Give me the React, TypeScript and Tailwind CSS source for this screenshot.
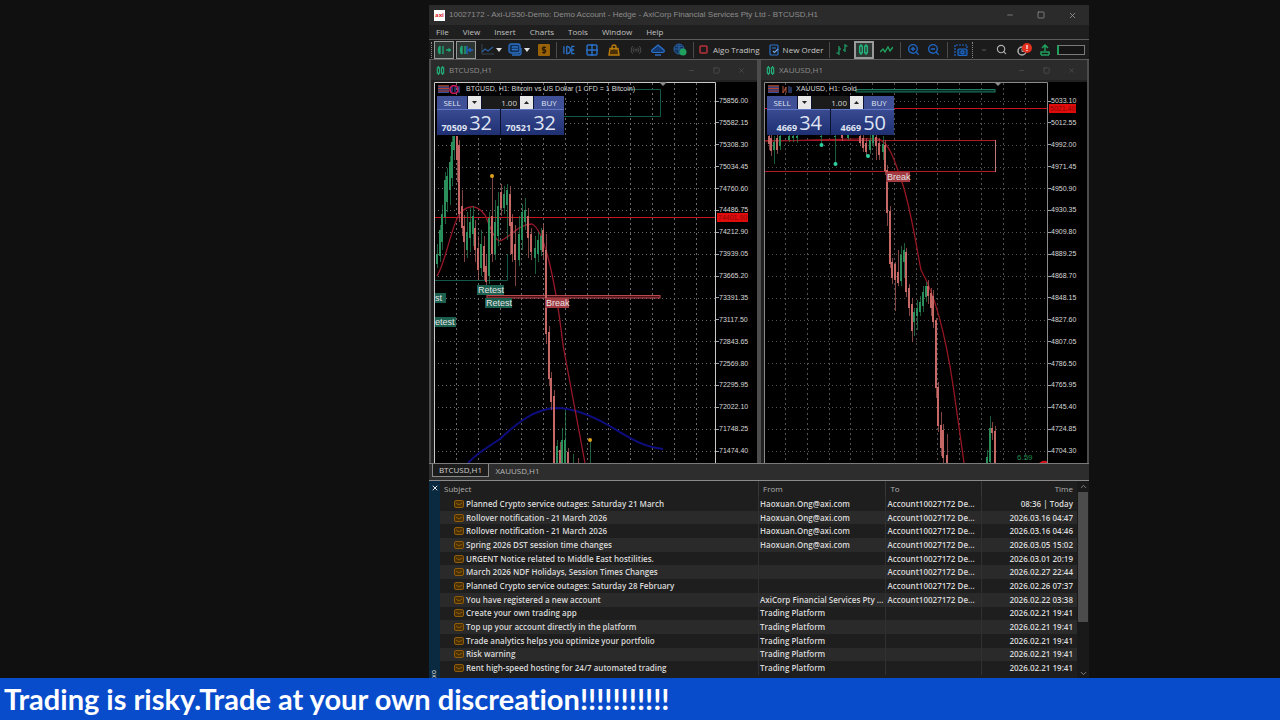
import { useState } from "react";
import type { ReactNode } from "react";
import { Search, Radio, X, Minus, Square, ChevronUp, ChevronDown, ZoomIn, ZoomOut } from "lucide-react";

// x, high, body top, body bottom, low, 1 = up / 0 = down
type Candle = [number, number, number, number, number, 0 | 1];
type Tag = { x: number; y: number; w: number; text: string; kind: "retest" | "break" };

const btcCandles: Candle[] = [
  [437, 244, 254, 264, 268, 1], [440, 225, 230, 256, 262, 1], [442, 205, 214, 242, 250, 1], [445, 172, 180, 217, 224, 1],
  [447, 168, 176, 202, 212, 1], [450, 156, 162, 190, 205, 1], [452, 136, 142, 178, 186, 1], [454, 136, 136, 150, 160, 1],
  [457, 136, 136, 160, 182, 0], [459, 140, 145, 214, 222, 0], [462, 190, 206, 228, 236, 0], [464, 215, 226, 242, 262, 0],
  [467, 212, 232, 250, 258, 1], [470, 208, 222, 238, 252, 1], [473, 206, 216, 234, 246, 1], [475, 220, 228, 250, 262, 0],
  [478, 236, 248, 270, 280, 0], [481, 230, 244, 268, 276, 1], [484, 236, 246, 272, 280, 0], [486, 255, 266, 282, 288, 0],
  [489, 212, 218, 276, 284, 1], [492, 176, 216, 254, 262, 0], [495, 200, 222, 254, 260, 1], [498, 192, 206, 236, 246, 1],
  [501, 184, 192, 208, 216, 0], [504, 186, 194, 208, 214, 1], [507, 184, 190, 205, 240, 1], [510, 186, 194, 226, 254, 0],
  [512, 214, 222, 254, 262, 0], [515, 225, 244, 260, 286, 0], [519, 216, 234, 260, 266, 1], [522, 204, 212, 240, 250, 1],
  [525, 198, 210, 222, 230, 1], [528, 208, 216, 238, 258, 0], [531, 228, 234, 252, 260, 0], [535, 236, 248, 258, 274, 1],
  [538, 232, 240, 254, 262, 1], [541, 228, 236, 250, 256, 1], [543, 224, 230, 252, 258, 0], [546, 234, 250, 334, 344, 0],
  [549, 326, 332, 379, 386, 0], [551, 372, 378, 402, 410, 0], [554, 390, 396, 463, 463, 0], [557, 440, 446, 463, 463, 1],
  [560, 442, 450, 463, 463, 0], [562, 428, 440, 463, 463, 1], [565, 410, 440, 463, 463, 1], [568, 448, 452, 463, 463, 0],
  [573, 454, 463, 463, 463, 1], [578, 458, 463, 463, 463, 0], [590, 442, 463, 463, 463, 1],
];

const xauCandles: Candle[] = [
  [769, 132, 136, 144, 150, 0], [771, 134, 138, 151, 156, 0], [774, 136, 142, 150, 164, 1], [777, 134, 138, 150, 154, 0],
  [780, 132, 136, 146, 150, 1], [789, 132, 136, 140, 142, 1], [793, 132, 136, 138, 142, 1], [797, 132, 136, 138, 143, 1],
  [821, 132, 136, 137, 145, 1], [835, 132, 136, 137, 164, 1], [842, 132, 135, 138, 141, 0], [848, 132, 135, 138, 140, 1],
  [860, 132, 136, 143, 146, 0], [863, 134, 138, 148, 152, 0], [866, 138, 143, 152, 156, 0], [870, 132, 140, 150, 154, 1],
  [873, 132, 135, 143, 147, 1], [876, 134, 137, 146, 160, 0], [879, 138, 143, 155, 160, 0], [883, 136, 144, 152, 160, 1],
  [885, 140, 145, 171, 175, 0], [887, 165, 170, 213, 226, 0], [890, 206, 211, 264, 268, 0], [892, 258, 262, 278, 284, 0],
  [895, 262, 264, 280, 311, 0], [898, 250, 272, 283, 286, 0], [901, 246, 255, 281, 286, 1], [904, 243, 250, 262, 278, 1],
  [906, 248, 252, 292, 297, 0], [909, 284, 288, 308, 316, 0], [912, 298, 304, 331, 342, 0], [914, 308, 312, 322, 336, 1],
  [917, 300, 308, 316, 330, 1], [920, 296, 302, 312, 316, 1], [923, 286, 292, 306, 312, 1], [926, 282, 286, 297, 302, 1],
  [928, 280, 286, 296, 304, 0], [931, 288, 293, 308, 316, 0], [933, 290, 296, 322, 328, 0], [936, 318, 320, 388, 398, 0],
  [938, 382, 387, 426, 432, 0], [941, 412, 425, 448, 456, 0], [943, 424, 430, 458, 463, 0], [947, 434, 455, 463, 463, 0],
  [987, 450, 457, 463, 463, 1], [990, 416, 428, 462, 463, 1], [992, 422, 428, 433, 440, 0], [995, 426, 431, 463, 463, 0],
];

const btcTags: Tag[] = [
  { x: 477, y: 285, w: 27, text: "Retest", kind: "retest" },
  { x: 485, y: 298, w: 27, text: "Retest", kind: "retest" },
  { x: 434, y: 293, w: 12, text: "st", kind: "retest" },
  { x: 434, y: 317, w: 22, text: "etest", kind: "retest" },
  { x: 545, y: 298, w: 24, text: "Break", kind: "break" },
];
const xauTags: Tag[] = [{ x: 886, y: 172, w: 24, text: "Break", kind: "break" }];

const btcPrices = ["75856.00", "75582.15", "75308.30", "75034.45", "74760.60", "74486.75", "74212.90", "73939.05", "73665.20", "73391.35", "73117.50", "72843.65", "72569.80", "72295.95", "72022.10", "71748.25", "71474.40"];
const xauPrices = ["5033.10", "5012.55", "4992.00", "4971.45", "4950.90", "4930.35", "4909.80", "4889.25", "4868.70", "4848.15", "4827.60", "4807.05", "4786.50", "4765.95", "4745.40", "4724.85", "4704.30"];

const HAO = "Haoxuan.Ong@axi.com";
const ACC = "Account10027172 De...";
const TP = "Trading Platform";
const mails = [
  ["Planned Crypto service outages: Saturday 21 March", HAO, ACC, "08:36 | Today"],
  ["Rollover notification - 21 March 2026", HAO, ACC, "2026.03.16 04:47"],
  ["Rollover notification - 21 March 2026", HAO, ACC, "2026.03.16 04:46"],
  ["Spring 2026 DST session time changes", HAO, ACC, "2026.03.05 15:02"],
  ["URGENT Notice related to Middle East hostilities.", "", ACC, "2026.03.01 20:19"],
  ["March 2026 NDF Holidays, Session Times Changes", "", ACC, "2026.02.27 22:44"],
  ["Planned Crypto service outages: Saturday 28 February", "", ACC, "2026.02.26 07:37"],
  ["You have registered a new account", "AxiCorp Financial Services Pty ...", ACC, "2026.02.22 03:38"],
  ["Create your own trading app", TP, "", "2026.02.21 19:41"],
  ["Top up your account directly in the platform", TP, "", "2026.02.21 19:41"],
  ["Trade analytics helps you optimize your portfolio", TP, "", "2026.02.21 19:41"],
  ["Risk warning", TP, "", "2026.02.21 19:41"],
  ["Rent high-speed hosting for 24/7 automated trading", TP, "", "2026.02.21 19:41"],
];

function Candles({ data }: { data: Candle[] }) {
  return (
    <g shapeRendering="crispEdges">
      {data.map(([x, hi, top, bot, lo, up]) => (
        <g key={x} fill={up ? "#2b8f5c" : "#c56866"}>
          <rect x={x} y={hi} width={1} height={lo - hi} opacity={0.65} />
          <rect x={x - 1} y={top} width={2} height={bot - top} />
        </g>
      ))}
    </g>
  );
}

function Grid({ x0, left, right, color }: { x0: number; left: number; right: number; color: string }) {
  const cols = Array.from({ length: 12 }, (_, i) => Math.round(x0 + i * 21.78) + 0.5);
  const rows = Array.from({ length: 17 }, (_, i) => Math.round(101 + i * 21.85) + 0.5);
  return (
    <g stroke={color}>
      {cols.map((x) => <line key={x} x1={x} x2={x} y1={83} y2={463} strokeDasharray="2 3" />)}
      {rows.map((y) => <line key={y} x1={left} x2={right} y1={y} y2={y} strokeDasharray="1 3" />)}
    </g>
  );
}

function Tags({ tags }: { tags: Tag[] }) {
  return (
    <>
      {tags.map((t) => (
        <g key={`${t.x}-${t.y}`}>
          <rect x={t.x} y={t.y} width={t.w} height={10} fill={t.kind === "retest" ? "#1b5f4f" : "#a23a42"} />
          <text x={t.x + 1} y={t.y + 8} fontSize={9} fill="#e4e4e4">{t.text}</text>
        </g>
      ))}
    </>
  );
}

function PriceAxis({ prices, tag, tagClass }: { prices: string[]; tag: string; tagClass: string }) {
  return (
    <div className="relative flex flex-1 flex-col justify-between pt-[14px] pb-[7px] font-['Liberation_Sans',sans-serif] text-[7px] text-[#d8d8d8]">
      {prices.map((p) => (
        <div key={p} className="flex h-[10px] items-center whitespace-nowrap leading-[10px]">
          <span className="h-px w-[3px] bg-[#a0a0a0]" />{p}
        </div>
      ))}
      <span className={`absolute left-px h-[9px] bg-[#e00c0c] px-px leading-[9px] text-[#8a0505] ${tagClass}`}>{tag}</span>
    </div>
  );
}

function TradePanel({ base, bid, ask }: { base: [string, string]; bid: string; ask: string }) {
  const [lots, setLots] = useState("1.00");
  const step = (d: number) => setLots((v) => Math.max(0.01, Number(v) + d).toFixed(2));
  return (
    <div className="absolute left-[3px] top-[14px] w-[127px] font-['Open_Sans',sans-serif] text-[#dfe3f2]">
      <div className="flex h-[13px] items-stretch gap-px bg-[#0c1230]">
        <button className="w-[30px] bg-[#3f5096] text-[8px] leading-[13px]">SELL</button>
        <button aria-label="Decrease volume" onClick={() => step(-0.01)} className="flex w-[13px] items-center justify-center bg-[#e8e8e8]">
          <svg width="5" height="3" viewBox="0 0 5 3"><path d="M0 0h5L2.5 3z" fill="#222" /></svg>
        </button>
        <input aria-label="Volume" value={lots} onChange={(e) => setLots(e.target.value)}
          className="min-w-0 flex-1 bg-[#1b1b1b] pr-0.5 text-right text-[8px] leading-[13px] text-[#d5d5d5] outline-none" />
        <button aria-label="Increase volume" onClick={() => step(0.01)} className="flex w-[13px] items-center justify-center bg-[#e8e8e8]">
          <svg width="5" height="3" viewBox="0 0 5 3"><path d="M0 3h5L2.5 0z" fill="#222" /></svg>
        </button>
        <button className="w-[30px] bg-[#3f5096] text-[8px] leading-[13px]">BUY</button>
      </div>
      <div className="grid h-[26px] grid-cols-2 gap-px bg-[#0c1230]">
        {[bid, ask].map((v, i) => (
          <button key={i} className="flex items-end justify-end gap-0.5 border-t border-[#5f76c4] bg-gradient-to-b from-[#3a4a90] to-[#1e2f72] pr-2">
            <span className="text-[9px] leading-[14px] font-bold">{base[i]}</span>
            <span className="text-[20px] leading-[24px]">{v}</span>
          </button>
        ))}
      </div>
    </div>
  );
}

function CandleIcon({ size = 10 }: { size?: number }) {
  return (
    <svg width={size} height={size} viewBox="0 0 10 10" fill="none" stroke="#23b07a" strokeWidth="1.3">
      <rect x="1.5" y="2" width="2.4" height="6" /><path d="M2.7 0v2M2.7 8v2M7.3 0v2M7.3 8v2" />
      <rect x="6.1" y="2" width="2.4" height="6" />
    </svg>
  );
}

function ChartWindow({ title, heading, flag, plotClass, children, overlay, axis }: {
  title: string; heading: string; flag: ReactNode; plotClass: string; children: ReactNode; overlay: ReactNode; axis: ReactNode;
}) {
  return (
    <section className="flex min-w-0 flex-1 flex-col border-x-2 border-[#4c4c4c] bg-[#2b2b2b]">
      <div className="flex h-5 items-center gap-1 pl-[5px] pr-3 text-[8px] text-[#8c8c8c]">
        <CandleIcon size={9} />
        <span className="flex-1">{title}</span>
        <div className="flex gap-[18px] text-[#5c5c5c]">
          <button aria-label="Minimize chart"><Minus size={7} /></button>
          <button aria-label="Maximize chart"><Square size={7} /></button>
          <button aria-label="Close chart"><X size={7} /></button>
        </div>
      </div>
      <div className="flex min-h-0 flex-1 border-t-2 border-l-[3px] border-[#202020] bg-black">
        <div className={`relative shrink-0 overflow-hidden ${plotClass}`}>
          {children}
          <div className="absolute left-1 top-[3px] flex h-2 items-center gap-1 whitespace-nowrap font-['Liberation_Sans',sans-serif] text-[7px] leading-2 text-[#d8d8d8]">
            {flag}<span>{heading}</span>
          </div>
          {overlay}
        </div>
        {axis}
      </div>
    </section>
  );
}

function Flag({ pair }: { pair: ReactNode }) {
  return (
    <svg width="24" height="9" viewBox="0 0 24 9">
      <path d="M0 1h11M0 3.5h11M0 6h11" stroke="#b8442a" strokeWidth="1.3" />
      <path d="M0 2.2h11M0 4.8h11M0 7.4h11" stroke="#3c4f9c" strokeWidth="1.2" />
      {pair}
    </svg>
  );
}

function Sep() {
  return <span className="h-4 w-px bg-[#4a4a4a]" />;
}

function Tool({ label, className = "w-[14px]", children }: { label: string; className?: string; children: ReactNode }) {
  return <button aria-label={label} className={`flex h-[18px] items-center justify-center ${className}`}>{children}</button>;
}

function Caret() {
  return <svg width="6" height="4" viewBox="0 0 6 4"><path d="M0 0h6L3 4z" fill="#e0e0e0" /></svg>;
}

function Toolbar() {
  return (
    <div className="flex h-[21px] shrink-0 items-center overflow-hidden whitespace-nowrap border-y border-[#5c5c5c] bg-[#1b1b1b] text-[8px] text-[#c8c8c8]">
      <div className="ml-[2px] h-4 w-px border-l border-dotted border-[#8a8a8a]" />
      <div className="ml-[2px] flex items-center gap-[2px]">
        <Tool label="Auto scroll" className="w-5 border border-[#9a9a9a] bg-[#2e3633]">
          <svg width="14" height="10" viewBox="0 0 14 10" fill="none" stroke="#1fa673" strokeWidth="1.4"><path d="M3 1C1 3 1 7 3 9M6 1v8M3 1v8M9 5h4M11.5 3.500l2 1.500-2 1.500" /></svg>
        </Tool>
        <Tool label="Chart shift" className="w-5 border border-[#9a9a9a] bg-[#2e3633]">
          <svg width="14" height="10" viewBox="0 0 14 10" fill="none" strokeWidth="1.4"><path d="M3 1C1 3 1 7 3 9M3 1v8M6 1v8" stroke="#1fa673" /><path d="M8 1v8M9 5h5M11 3v4" stroke="#1f66c4" /></svg>
        </Tool>
      </div>
      <div className="ml-1 flex items-center gap-[2px]">
        <Tool label="Indicators"><svg width="13" height="11" viewBox="0 0 13 11" fill="none"><path d="M1 0v10h12" stroke="#3a4450" /><path d="M1 8l3-3 3 2 5-4" stroke="#2b5f9e" strokeWidth="1.2" /></svg></Tool>
        <Caret />
        <Tool label="Templates" className="ml-1 w-[14px]">
          <svg width="14" height="13" viewBox="0 0 14 13" fill="#14335a" stroke="#2a70c8" strokeWidth="1.3"><rect x="1" y="1" width="11" height="9" rx="2" /><path d="M4 4h6M4 6.500h6M4 12h7q2 0 2-2V5" fill="none" /></svg>
        </Tool>
        <Caret />
      </div>
      <div className="ml-2 flex items-center gap-[6px]">
        <Tool label="Market" className="w-3">
          <svg width="12" height="12" viewBox="0 0 12 12"><rect width="12" height="12" rx="1" fill="#9a6206" /><path d="M8 3.500H5q-1.300 1.200 0 2.500h2q1.300 1.200 0 2.500H4M6 2v8" fill="none" stroke="#2a1c04" strokeWidth="1.200" /></svg>
        </Tool>
        <Sep />
        <Tool label="MetaEditor IDE" className="w-3">
          <svg width="13" height="10" viewBox="0 0 13 10" fill="none" stroke="#2a70c8" strokeWidth="1.4"><path d="M1 1v8M4 1v8h1q3-1 3-4T5 1H4M12.500 1H9.500v8h3M9.500 5h2.500" /></svg>
        </Tool>
      </div>
      <div className="ml-[10px] flex items-center gap-2">
        <Tool label="Tile windows">
          <svg width="12" height="12" viewBox="0 0 12 12" fill="none" stroke="#2a70c8" strokeWidth="1.400"><rect x="1" y="1" width="10" height="10" rx="1" /><path d="M6 0v12M0 6h12" /></svg>
        </Tool>
        <Tool label="Shop">
          <svg width="12" height="12" viewBox="0 0 12 12" fill="#4a3105" stroke="#b97c0c" strokeWidth="1.400"><path d="M2 4.500h8l1 6.500H1z" /><path d="M4 6V3q0-2 2-2t2 2v3" fill="none" /></svg>
        </Tool>
        <Tool label="Signals"><Radio size={12} className="text-[#4a4a4a]" /></Tool>
        <Tool label="Cloud">
          <svg width="14" height="12" viewBox="0 0 14 12"><path d="M7 1l6 5q1 2-1 2.500H2Q0 8 1 6z" fill="#123a70" stroke="#2a70c8" strokeWidth="1.200" /><path d="M4 11h6" stroke="#2a70c8" strokeWidth="1.400" /></svg>
        </Tool>
        <Tool label="Community">
          <svg width="14" height="13" viewBox="0 0 14 13"><circle cx="6" cy="6" r="5" fill="#12345c" stroke="#2a5f9e" /><path d="M1 6h10M6 1v10M3 3q3 2 6 0" stroke="#2a5f9e" fill="none" /><circle cx="10" cy="9" r="3.500" fill="#1fa05c" /></svg>
        </Tool>
      </div>
      <div className="ml-[6px] flex items-center gap-[5px]">
        <Sep />
        <button className="flex items-center gap-[5px]">
          <svg width="9" height="9" viewBox="0 0 9 9"><rect x="1" y="1" width="7" height="7" rx="1" fill="none" stroke="#b8323a" strokeWidth="1.500" /></svg>
          Algo Trading
        </button>
        <button className="ml-1 flex items-center gap-1">
          <svg width="10" height="12" viewBox="0 0 10 12" fill="none" stroke="#2a70c8" strokeWidth="1.200"><rect x="1" y="1" width="8" height="10" rx="1" /><path d="M3 4h4" /><path d="M4 7l1.500 1.500L9 5" stroke="#6fa6e8" /></svg>
          New Order
        </button>
        <Sep />
      </div>
      <div className="ml-[6px] flex items-center gap-[6px]">
        <Tool label="Bars" className="w-3"><svg width="12" height="11" viewBox="0 0 12 11" fill="none" stroke="#1d8f5c" strokeWidth="1.400"><path d="M3 2v9M0.500 9H3M3 5h2M9 0v8M9 2h2.500M7 6h2" /></svg></Tool>
        <Tool label="Candles" className="w-5 border-2 border-[#9a9a9a] bg-[#2e3633]"><CandleIcon size={11} /></Tool>
        <Tool label="Line"><svg width="13" height="8" viewBox="0 0 13 8" fill="none" stroke="#1fa05c" strokeWidth="1.400"><path d="M0 6l3-3 2 3 3-5 2 4 3-4" /></svg></Tool>
        <Sep />
        <Tool label="Zoom in"><ZoomIn size={13} className="text-[#1f66c4]" strokeWidth={2.5} /></Tool>
        <Tool label="Zoom out"><ZoomOut size={13} className="text-[#1f66c4]" strokeWidth={2.5} /></Tool>
        <Sep />
        <Tool label="Screenshot">
          <svg width="14" height="12" viewBox="0 0 14 12" fill="none" stroke="#1f66c4" strokeWidth="1.200"><path d="M1 12V1h12v4" strokeDasharray="2 1" /><rect x="4" y="5" width="9" height="6.500" rx="1" fill="#12345c" /><circle cx="8.500" cy="8.300" r="1.500" /></svg>
        </Tool>
      </div>
      <span className="ml-1 h-4 border-l border-dotted border-[#8a8a8a]" />
      <div className="ml-auto mr-[4px] flex items-center gap-[7px]">
        <Minus size={6} className="text-[#9a9a9a]" />
        <Tool label="Search" className="w-[14px]"><Search size={11} className="text-[#b0b0b0]" strokeWidth={2.5} /></Tool>
        <Tool label="Notifications" className="w-[18px]">
          <svg width="16" height="14" viewBox="0 0 16 14"><circle cx="6" cy="8" r="4" fill="none" stroke="#b0b0b0" strokeWidth="1.500" /><path d="M6 5.500v3h3" stroke="#b0b0b0" fill="none" /><circle cx="11" cy="5" r="5" fill="#e0301e" /><path d="M11 2v4M11 7v1" stroke="#fff" strokeWidth="1.200" /></svg>
        </Tool>
        <svg width="10" height="12" viewBox="0 0 10 12" fill="none" stroke="#1fa05c" strokeWidth="1.500"><path d="M5 1v8M2 4l3-3 3 3M1 11V8h3M9 11V8H6M1 11h8" /></svg>
        <span className="h-[10px] w-[28px] border border-[#7a7a7a] border-l-2 border-l-[#1fa05c] bg-[#151515]" />
      </div>
    </div>
  );
}

function Envelope() {
  return (
    <svg width="10" height="8" viewBox="0 0 10 8" className="shrink-0"><rect x="0.500" y="0.500" width="9" height="7" rx="1.500" fill="#4a3005" stroke="#8f5c0a" /><path d="M2 3l3 2 3-2" fill="none" stroke="#8f5c0a" /></svg>
  );
}

export default function App() {
  const [tab, setTab] = useState("BTCUSD,H1");

  return (
    <div className="flex h-screen flex-col overflow-hidden bg-[#101010] font-['Open_Sans',sans-serif]">
      <main className="grid min-h-0 flex-1 grid-cols-[429fr_660fr_191fr] pt-[5px]">
        <div className="col-start-2 flex min-h-0 min-w-0 flex-col bg-[#1f1f1f]">
          {/* Title bar */}
          <header className="flex h-5 shrink-0 items-center gap-1 bg-[#2b2b2b] pl-[5px] pr-[12px] text-[8px] text-[#8c8c8c]">
            <span className="flex h-[11px] w-[11px] items-center justify-center bg-white text-[6px] leading-none font-bold text-[#d8262c]">axi</span>
            <h1 className="flex-1 truncate font-['Liberation_Sans',sans-serif]">10027172 - Axi-US50-Demo: Demo Account - Hedge - AxiCorp Financial Services Pty Ltd - BTCUSD,H1</h1>
            <div className="flex gap-[23px] text-[#a0a0a0]">
              <button aria-label="Minimize"><Minus size={8} /></button>
              <button aria-label="Maximize"><Square size={8} /></button>
              <button aria-label="Close"><X size={9} /></button>
            </div>
          </header>

          {/* Menu */}
          <nav className="flex h-[14px] shrink-0 items-center gap-[14px] pl-[7px] text-[8px] text-[#c0c0c0]">
            {["File", "View", "Insert", "Charts", "Tools", "Window", "Help"].map((m) => <button key={m}>{m}</button>)}
          </nav>

          <Toolbar />

          {/* Charts */}
          <div className="flex min-h-0 flex-1 bg-[#1a1a1a]">
            <ChartWindow
              title="BTCUSD,H1"
              heading="BTCUSD, H1: Bitcoin vs US Dollar (1 CFD = 1 Bitcoin)"
              plotClass="w-[282px]"
              flag={<Flag pair={<><circle cx="16" cy="4.500" r="4" fill="none" stroke="#c2185b" strokeWidth="1.800" /><path d="M14 2v5M17 2v5M21 1v7" stroke="#3f62c4" /></>} />}
              overlay={<TradePanel base={["70509", "70521"]} bid="32" ask="32" />}
              axis={<PriceAxis prices={btcPrices} tag="74401.90" tagClass="top-[131px]" />}
            >
              <svg className="h-full w-full font-['Liberation_Sans',sans-serif]" viewBox="434 82 282 381" preserveAspectRatio="xMinYMin slice">
                <Grid x0={456} left={434} right={716} color="#6a6a6a" />
                <path d="M627 89.500H660.500V116.500H564M434 280.500H507.500V254" fill="none" stroke="#14584a" />
                <path d="M434 217.500H716" stroke="#c8141e" />
                <path d="M468 463C478 452 490 446 500 439C518 422 535 409 556 408C574 408 592 416 608 425C628 437 642 447 663 449" fill="none" stroke="#0d0d80" strokeWidth="2" />
                <path d="M437 276C446 262 451 226 460 213C470 203 478 206 485 215C490 226 494 240 500 241C510 238 518 224 532 224C545 230 556 285 563 345L585 463" fill="none" stroke="#96182a" strokeWidth="1.300" />
                <rect x="487" y="295.500" width="173" height="2.500" fill="#4a0f14" stroke="#b84a4e" />
                <Candles data={btcCandles} />
                <circle cx="492" cy="176" r="2" fill="#e0a21a" />
                <circle cx="590" cy="440" r="2" fill="#e0a21a" />
                <Tags tags={btcTags} />
                <path d="M434.500 463V82.500H715.500V463" fill="none" stroke="#c8c8c8" />
                <path d="M659 82h8l-4 4z" fill="#8a8a8a" />
              </svg>
            </ChartWindow>
            <ChartWindow
              title="XAUUSD,H1"
              heading="XAUUSD, H1: Gold"
              plotClass="w-[284px]"
              flag={<Flag pair={<><path d="M15 1v7l3-6v6" stroke="#b8563a" fill="none" /><path d="M21 1v7M23 2v6" stroke="#4c66b4" /></>} />}
              overlay={<TradePanel base={["4669", "4669"]} bid="34" ask="50" />}
              axis={<PriceAxis prices={xauPrices} tag="5021.40" tagClass="top-[22px]" />}
            >
              <svg className="h-full w-full font-['Liberation_Sans',sans-serif]" viewBox="764 82 284 381" preserveAspectRatio="xMinYMin slice">
                <Grid x0={785} left={764} right={1048} color="#525252" />
                <rect x="856" y="89.500" width="139" height="2.500" fill="#0a2a24" stroke="#1d7a60" />
                <path d="M764 108.500H1048" stroke="#c8141e" />
                <path d="M764 140.500H995M764 171.500H995" stroke="#b01a26" />
                <path d="M995.500 140V172" stroke="#c07a7c" />
                <path d="M764 141C800 141 850 138 878 139C890 142 896 165 903 185C912 215 916 245 921 270C938 300 947 345 953 385C958 420 961 440 964 463" fill="none" stroke="#961622" strokeWidth="1.300" />
                <Candles data={xauCandles} />
                {[[821.5, 145], [835.5, 164], [868, 156]].map(([x, y]) => <circle key={x} cx={x} cy={y} r="2" fill="#2fd0a0" />)}
                <Tags tags={xauTags} />
                <text x="1017" y="460" fontSize="8" fill="#1f8a4c">6.59</text>
                <path d="M1039 463q5-4 9-1v1z" fill="#d0161c" />
                <path d="M764.500 463V82.500H1047.500V463" fill="none" stroke="#8a8a8a" />
                <path d="M994 82h8l-4 4z" fill="#8a8a8a" />
              </svg>
            </ChartWindow>
          </div>

          {/* Chart tabs */}
          <div className="flex h-[17px] shrink-0 items-start border-t border-[#7a7a7a] bg-[#2d2d2d] pl-[3px] text-[8px] text-[#b8b8b8]">
            {["BTCUSD,H1", "XAUUSD,H1"].map((t) => (
              <button key={t} onClick={() => setTab(t)}
                className={`h-[13px] w-[57px] leading-[12px] ${tab === t ? "border border-t-0 border-[#8a8a8a] bg-[#1c1c1c] text-[#d0d0d0]" : ""}`}>{t}</button>
            ))}
          </div>

          {/* Mailbox */}
          <div className="flex h-[198px] shrink-0 border-t border-[#8a8a8a] bg-[#1e1e1e]">
            <div className="flex w-[11px] flex-col items-center justify-between bg-[#0a2a42] pt-[3px] text-[#e0e0e0]">
              <button aria-label="Close toolbox"><X size={8} strokeWidth={3} /></button>
              <span className="text-[7px] leading-none [writing-mode:vertical-rl]">ox</span>
            </div>
            <div className="min-w-0 flex-1 overflow-hidden">
              <table className="h-[194px] w-full table-fixed border-collapse text-[8px] leading-3 text-[#dadada]">
                <colgroup><col /><col className="w-[20%]" /><col className="w-[15%]" /><col className="w-[15%]" /></colgroup>
                <thead className="text-[#b0b0b0]">
                  <tr className="h-4">
                    <th className="p-0 pl-1 text-left font-normal">Subject</th>
                    <th className="border-l border-[#383838] p-0 pl-1 text-left font-normal">From</th>
                    <th className="border-l border-[#383838] p-0 pl-1 text-left font-normal">To</th>
                    <th className="border-l border-[#383838] p-0 pr-1 text-right font-normal">Time</th>
                  </tr>
                </thead>
                <tbody className="font-semibold">
                  {mails.map(([subject, from, to, time], i) => (
                    <tr key={i} className="even:bg-[#2a2a2a]">
                      <td className="p-0 pl-[14px]"><div className="flex items-center gap-[2px] whitespace-nowrap"><Envelope />{subject}</div></td>
                      <td className="truncate border-l border-[#303030] p-0 pl-px">{from}</td>
                      <td className="truncate border-l border-[#303030] p-0 pl-px">{to}</td>
                      <td className="whitespace-nowrap border-l border-[#303030] p-0 pr-1 text-right">{time}</td>
                    </tr>
                  ))}
                </tbody>
              </table>
            </div>
            <div className="flex w-[12px] flex-col items-center bg-[#191919] text-[#a0a0a0]">
              <ChevronUp size={9} className="my-px shrink-0" />
              <span className="h-[130px] w-[10px] bg-[#4c4c4c]" />
              <ChevronDown size={9} className="mt-auto" />
            </div>
          </div>
        </div>
      </main>

      <footer className="flex h-[42px] shrink-0 items-center bg-[#084bcb] pl-1">
        <p className="whitespace-nowrap font-['Lato',sans-serif] text-[29px] leading-[42px] font-bold text-white [font-variant-ligatures:none]">Trading is risky.Trade at your own discreation!!!!!!!!!!!</p>
      </footer>
    </div>
  );
}
